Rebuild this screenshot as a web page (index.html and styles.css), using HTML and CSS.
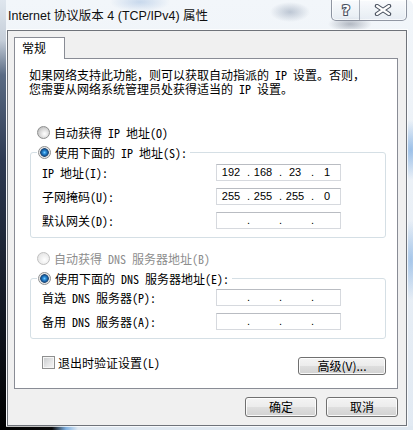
FILE: index.html
```html
<!DOCTYPE html>
<html lang="zh-CN">
<head>
<meta charset="utf-8">
<title>Internet 协议版本 4 (TCP/IPv4) 属性</title>
<link rel="stylesheet" href="styles.css">
</head>
<body>
<div class="window">
  <div class="titlebar">
    <div class="title">Internet 协议版本 4 (TCP/IPv4) 属性</div>
    <div class="caption-btns">
      <div class="cap help">
        <svg width="14" height="16" viewBox="0 0 14 16"><text x="7" y="13" text-anchor="middle" class="q">?</text></svg>
      </div>
      <div class="cap close">
        <svg width="18" height="12" viewBox="0 0 18 12">
          <path d="M3 2 L15 10 M15 2 L3 10" class="x-out"/>
          <path d="M3 2 L15 10 M15 2 L3 10" class="x-in"/>
        </svg>
      </div>
    </div>
  </div>
  <div class="client">
    <div class="tabs"><div class="tab">常规</div></div>
    <div class="page">
      <p class="desc"><span class="line">如果网络支持此功能，则可以获取自动指派的 IP 设置。否则，</span><span class="line">您需要从网络系统管理员处获得适当的 IP 设置。</span></p>
      <div class="radio-row"><span class="radio"></span>自动获得 IP 地址(O)</div>
      <fieldset class="group">
        <legend><span class="radio checked"></span>使用下面的 IP 地址(S):</legend>
        <div class="rows">
          <span class="lbl">IP 地址(I):</span>
          <div class="ipbox"><span class="oct">192</span><span class="dot">.</span><span class="oct">168</span><span class="dot">.</span><span class="oct">23</span><span class="dot">.</span><span class="oct">1</span></div>
          <span class="lbl">子网掩码(U):</span>
          <div class="ipbox"><span class="oct">255</span><span class="dot">.</span><span class="oct">255</span><span class="dot">.</span><span class="oct">255</span><span class="dot">.</span><span class="oct">0</span></div>
          <span class="lbl">默认网关(D):</span>
          <div class="ipbox"><span class="oct"></span><span class="dot">.</span><span class="oct"></span><span class="dot">.</span><span class="oct"></span><span class="dot">.</span><span class="oct"></span></div>
        </div>
      </fieldset>
      <div class="radio-row dns-auto disabled"><span class="radio"></span>自动获得 DNS 服务器地址(B)</div>
      <fieldset class="group dns">
        <legend><span class="radio checked"></span>使用下面的 DNS 服务器地址(E):</legend>
        <div class="rows">
          <span class="lbl">首选 DNS 服务器(P):</span>
          <div class="ipbox"><span class="oct"></span><span class="dot">.</span><span class="oct"></span><span class="dot">.</span><span class="oct"></span><span class="dot">.</span><span class="oct"></span></div>
          <span class="lbl">备用 DNS 服务器(A):</span>
          <div class="ipbox"><span class="oct"></span><span class="dot">.</span><span class="oct"></span><span class="dot">.</span><span class="oct"></span><span class="dot">.</span><span class="oct"></span></div>
        </div>
      </fieldset>
      <div class="bottom-row">
        <div class="check-row"><span class="checkbox"></span>退出时验证设置(L)</div>
        <button class="btn adv">高级(V)...</button>
      </div>
    </div>
    <div class="dlg-btns">
      <button class="btn dlg">确定</button>
      <button class="btn dlg">取消</button>
    </div>
  </div>
</div>
</body>
</html>
```
FILE: styles.css
```css
* { box-sizing: border-box; }
html, body { margin: 0; padding: 0; }
body {
  width: 413px;
  height: 430px;
  overflow: hidden;
  font-family: "Noto Sans Mono CJK SC", "Noto Sans CJK SC", sans-serif;
  font-size: 12px;
  color: #000;
}
.window {
  width: 413px;
  height: 430px;
  border-top-right-radius: 6px;
  background:
    linear-gradient(to right, #000 0, #0a0a0a 52px, #7fb0e0 66px, #dfe8f1 78px) left bottom / 100% 4px no-repeat,
    linear-gradient(#dfe6ee 0, #c6cfda 40px, #5a6b84 75px, #2e3a52 160px, #141a26 300px, #000 430px) left top / 6px 100% no-repeat,
    radial-gradient(ellipse 14px 30px at 411px 150px, rgba(120,170,225,.7), transparent),
    radial-gradient(ellipse 10px 40px at 411px 260px, rgba(120,170,225,.6), transparent),
    radial-gradient(ellipse 30px 10px at 140px 2px, rgba(120,160,210,.35), transparent),
    radial-gradient(ellipse 20px 10px at 290px 12px, rgba(90,110,140,.35), transparent),
    radial-gradient(ellipse 22px 8px at 350px 24px, rgba(60,70,90,.35), transparent),
    linear-gradient(#f2f6fa, #e2eaf3);
}
.titlebar {
  display: flex;
  align-items: flex-start;
  height: 30px;
}
.title {
  padding: 9px 0 0 8px;
  font-family: "Liberation Sans", "Noto Sans CJK SC", sans-serif;
  font-size: 12.5px;
  line-height: 14px;
  color: #101010;
  text-shadow: 0 0 6px rgba(255,255,255,.9);
}
.caption-btns {
  margin-left: auto;
  margin-right: 6px;
  display: flex;
  height: 21px;
  border: 1px solid rgba(60,70,90,.55);
  border-top: none;
  border-radius: 0 0 5px 5px;
  overflow: hidden;
  background: linear-gradient(rgba(255,255,255,.55), rgba(225,232,240,.7));
  box-shadow: inset 0 0 0 1px rgba(255,255,255,.6);
}
.cap {
  display: flex;
  align-items: center;
  justify-content: center;
  height: 100%;
}
.cap.help { width: 28px; border-right: 1px solid rgba(60,70,90,.4); }
.cap.close { width: 46px; }
.q {
  font-family: "DejaVu Sans", sans-serif;
  font-weight: bold;
  font-size: 14px;
  fill: #fff;
  stroke: #4a5260;
  stroke-width: 2.2px;
  paint-order: stroke;
}
.x-out { stroke: #4a5260; stroke-width: 4.4; stroke-linecap: round; fill: none; }
.x-in { stroke: #fff; stroke-width: 2.2; stroke-linecap: round; fill: none; }

.client {
  margin-left: 7px;
  width: 400px;
  height: 396px;
  border: 1px solid #6f737a;
  box-shadow: 0 0 0 1px rgba(255,255,255,.75);
  background: #f0f0f0;
  padding: 6px 0 0 6px;
}
.tabs { display: flex; }
.tab {
  position: relative;
  z-index: 1;
  width: 51px;
  height: 22px;
  margin-bottom: -1px;
  border: 1px solid #898c95;
  border-bottom: none;
  background: #fff;
  padding-left: 7px;
  line-height: 20px;
}
.page {
  width: 384px;
  height: 331px;
  border: 1px solid #898c95;
  background: #fff;
}
.desc {
  margin: 9px 0 0 14px;
}
.desc .line {
  display: block;
  height: 14px;
  line-height: 14px;
  white-space: nowrap;
}
.radio-row, legend, .check-row {
  display: flex;
  align-items: center;
  height: 13px;
  line-height: 13px;
  white-space: nowrap;
}
.radio-row { margin: 30px 0 0 22px; }
.radio-row.dns-auto { margin-top: 14px; }
.disabled { color: #8d8d8d; }
.radio {
  display: inline-block;
  flex: none;
  width: 13px;
  height: 13px;
  margin-right: 4px;
  border-radius: 50%;
  border: 1px solid #8e8f8f;
  background: radial-gradient(circle at 60% 62%, #ffffff 0, #f0f0f0 2px, #d6d6d6 5px, #c4c4c4 7px);
}
.radio.checked {
  background: radial-gradient(circle at 50% 50%, #7fd0ff 0, #2c8fdc 1.5px, #14508c 3.5px, #2a4f78 4px, #e2e2e2 4.6px, #f4f4f4 6px);
}
.disabled .radio {
  border-color: #c0c0c0;
  background: radial-gradient(circle at 60% 62%, #fff 0, #f4f4f4 3px, #e6e6e6 7px);
}
.group {
  margin: 7px 0 0 15px;
  width: 356px;
  min-width: 0;
  border: 1px solid #d5dfe5;
  border-radius: 3px;
  padding: 5px 0 8px 11px;
}
.group.dns { padding-top: 4px; }
legend {
  margin-left: -5px;
  padding: 0 3px 0 1px;
  background: #fff;
}
.rows {
  display: grid;
  grid-template-columns: 174px 125px;
  grid-auto-rows: 17px;
  row-gap: 7px;
  align-items: center;
}
.lbl { line-height: 13px; white-space: nowrap; }
.ipbox {
  height: 17px;
  display: flex;
  align-items: center;
  padding-left: 1px;
  border: 1px solid #d6d9de;
  border-top-color: #b9bcc2;
  background: #fff;
  font-family: "Liberation Sans", sans-serif;
  font-size: 11px;
  line-height: 15px;
}
.oct { width: 26px; text-align: center; }
.dot { width: 6px; text-align: right; }
.bottom-row {
  display: flex;
  justify-content: space-between;
  align-items: flex-start;
  margin-top: 17px;
  padding: 0 11px 0 27px;
}
.check-row { height: 13px; }
.checkbox {
  display: inline-block;
  width: 13px;
  height: 13px;
  margin-right: 3px;
  border: 1px solid #8e8f8f;
  box-shadow: inset 0 0 0 1px #f6f6f6;
  background: linear-gradient(135deg, #c6c8ca 0, #e4e5e6 55%, #f8f8f8 100%);
}
.btn {
  font-family: "Noto Sans CJK SC", sans-serif;
  font-size: 12px;
  line-height: 14px;
  color: #000;
  padding: 0;
  border: 1px solid #707070;
  border-radius: 3px;
  background: linear-gradient(#f4f4f4 0, #ececec 48%, #dedede 52%, #d2d2d2 100%);
  box-shadow: inset 0 0 0 1px rgba(255,255,255,.85);
}
.btn.adv {
  width: 88px;
  height: 18px;
  margin-top: 1px;
}
.dlg-btns {
  display: flex;
  justify-content: flex-end;
  gap: 9px;
  margin-top: 8px;
  padding-right: 8px;
}
.btn.dlg {
  width: 72px;
  height: 20px;
}
```
